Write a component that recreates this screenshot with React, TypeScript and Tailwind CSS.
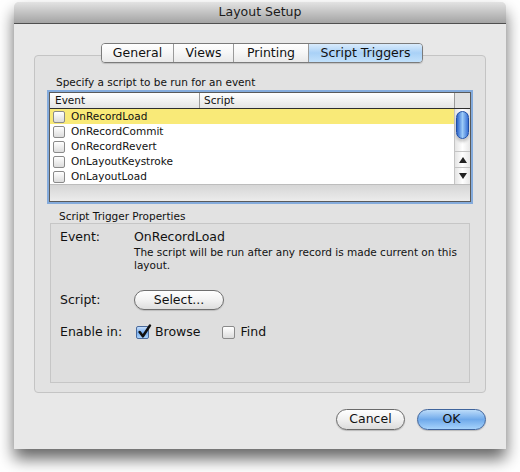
import React from 'react';

const events = ['OnRecordLoad', 'OnRecordCommit', 'OnRecordRevert', 'OnLayoutKeystroke', 'OnLayoutLoad'];
const tabs = [
  { label: 'General', w: 'w-[71px]' },
  { label: 'Views', w: 'w-[60px]' },
  { label: 'Printing', w: 'w-[75px]' },
  { label: 'Script Triggers', w: 'w-[114px]', active: true },
];

const Check: React.FC<{ checked?: boolean; big?: boolean }> = ({ checked, big }) =>
  checked ? (
    <span className="relative block w-[13px] h-[13px] rounded-[2px] border border-[#4a6a9c] bg-gradient-to-b from-[#c6defa] via-[#78aef0] to-[#a9d2fb] shrink-0">
      <svg viewBox="0 0 14 14" className="absolute -top-[3px] left-0 w-[15px] h-[15px]">
        <path d="M2.5 7.5 L5.5 11.5 L12 1.5" fill="none" stroke="#111" strokeWidth="2.4" strokeLinecap="round" strokeLinejoin="round" />
      </svg>
    </span>
  ) : (
    <span className={`block ${big ? 'w-[13px] h-[13px]' : 'w-[12px] h-[12px]'} rounded-[2px] border border-[#8a8a8a] bg-gradient-to-b from-[#ffffff] to-[#dcdcdc] shrink-0`} />
  );

const App: React.FC = () => {
  return (
    <div className="w-[520px] h-[472px] bg-white pt-[2px] pl-[14px] font-['DejaVu_Sans',sans-serif] text-[#111]">
      <div className="w-[492px] h-[447px] flex flex-col rounded-t-[5px] bg-[#e8e8e8] shadow-[0_10px_16px_rgba(0,0,0,0.6)]">
        {/* title bar */}
        <div className="h-[22px] rounded-t-[5px] bg-gradient-to-b from-[#e3e3e3] to-[#a4a4a4] border-b border-[#4f4f4f] flex items-center justify-center text-[12.5px] text-[#1a1a1a]">
          Layout Setup
        </div>

        <div className="flex flex-col px-[20px]">
          {/* tabs */}
          <div className="mt-[19px] ml-[67px] self-start relative z-10 flex h-[20px] rounded-[4px] border border-[#7b7b7b] overflow-hidden shadow-[0_1px_1px_rgba(0,0,0,0.15)]">
            {tabs.map((t, i) => (
              <div
                key={t.label}
                className={`${t.w} h-full flex items-center justify-center text-[12.5px] ${i > 0 ? 'border-l border-[#9a9a9a]' : ''} ${
                  t.active
                    ? 'bg-gradient-to-b from-[#d9ebfc] via-[#a9d1f7] to-[#c2e1fb]'
                    : 'bg-gradient-to-b from-[#ffffff] via-[#f6f6f6] to-[#e9e9e9]'
                }`}
              >
                {t.label}
              </div>
            ))}
          </div>

          {/* tab panel */}
          <div className="-mt-[8px] h-[338px] rounded-[4px] border border-[#c4c4c4] bg-[#e2e2e2] pl-[14px] flex flex-col">
            <div className="mt-[19px] ml-[7px] text-[10.5px] leading-[14px]">Specify a script to be run for an event</div>

            {/* list */}
            <div className="mt-[3px] w-[422px] h-[110px] border border-[#5a5a5a] shadow-[0_0_0_2px_#84abdc] bg-white flex flex-col">
              <div className="h-[16px] flex border-b border-[#2e2e2e] bg-gradient-to-b from-[#ffffff] to-[#e4e4e4] text-[10.5px]">
                <div className="w-[150px] border-r border-[#9a9a9a] pl-[5px] leading-[15px]">Event</div>
                <div className="flex-1 pl-[4px] leading-[15px]">Script</div>
                <div className="w-[16px] border-l border-[#9a9a9a] bg-[#e2e2e2]" />
              </div>
              <div className="flex h-[75px]">
                <div className="flex-1 flex flex-col">
                  {events.map((e, i) => (
                    <div key={e} className={`h-[15px] flex items-center pl-[3px] gap-[6px] text-[10.5px] ${i === 0 ? 'bg-[#f9ea78]' : ''}`}>
                      <Check />
                      <span>{e}</span>
                    </div>
                  ))}
                </div>
                {/* vertical scrollbar */}
                <div className="w-[16px] border-l border-[#c4c4c4] bg-gradient-to-r from-[#e4e4e4] via-[#ffffff] to-[#e8e8e8] flex flex-col">
                  <div className="h-[42px] pt-[2px] px-[1px]">
                    <div className="h-[28px] rounded-full border border-[#1f4fa6] bg-gradient-to-r from-[#2f63c8] via-[#9ccbf8] to-[#3b71d4] shadow-[0_3px_3px_rgba(0,0,0,0.2)]" />
                  </div>
                  <div className="h-[16px] border-t border-[#c4c4c4] flex items-center justify-center">
                    <svg viewBox="0 0 8 6" className="w-[8px] h-[6px]"><path d="M4 0 L8 6 L0 6 Z" fill="#222" /></svg>
                  </div>
                  <div className="h-[16px] border-t border-[#c4c4c4] flex items-center justify-center">
                    <svg viewBox="0 0 8 6" className="w-[8px] h-[6px]"><path d="M0 0 L8 0 L4 6 Z" fill="#222" /></svg>
                  </div>
                </div>
              </div>
              <div className="flex-1 border-t border-[#bdbdbd] bg-gradient-to-b from-[#d6d6d6] to-[#ececec]" />
            </div>

            {/* properties */}
            <div className="mt-[7px] ml-[10px] text-[10.5px] leading-[14px]">Script Trigger Properties</div>
            <div className="w-[420px] h-[160px] ml-[1px] border border-[#c6c6c6] bg-[#dedede] pl-[9px] pt-[5px] flex flex-col">
              <div className="flex">
                <div className="w-[74px] text-[12.5px] leading-[16px]">Event:</div>
                <div className="flex flex-col">
                  <div className="text-[12.5px] leading-[16px]">OnRecordLoad</div>
                  <div className="mt-[1px] text-[10.5px] leading-[13px]">
                    The script will be run after any record is made current on this
                    <br />
                    layout.
                  </div>
                </div>
              </div>
              <div className="flex items-center mt-[18px]">
                <div className="w-[74px] text-[12.5px] leading-[16px]">Script:</div>
                <div className="w-[90px] h-[20px] rounded-full border border-[#6f6f6f] bg-gradient-to-b from-[#ffffff] via-[#f2f2f2] to-[#dedede] flex items-center justify-center text-[12.5px] shadow-[0_1px_1px_rgba(0,0,0,0.15)]">
                  Select...
                </div>
              </div>
              <div className="flex items-center mt-[14px] h-[16px]">
                <div className="w-[76px] text-[12.5px] leading-[16px]">Enable in:</div>
                <Check checked />
                <span className="ml-[6px] text-[12.5px]">Browse</span>
                <span className="ml-[21px]"><Check big /></span>
                <span className="ml-[6px] text-[12.5px]">Find</span>
              </div>
            </div>
          </div>

          {/* buttons */}
          <div className="mt-[16px] flex justify-end gap-[12px]">
            <div className="w-[69px] h-[21px] rounded-full border border-[#6a6a6a] bg-gradient-to-b from-[#ffffff] via-[#f0f0f0] to-[#dcdcdc] flex items-center justify-center text-[12.5px] shadow-[0_1px_1px_rgba(0,0,0,0.2)]">
              Cancel
            </div>
            <div className="w-[69px] h-[21px] rounded-full border border-[#3f649c] bg-gradient-to-b from-[#bcdcf9] via-[#6fa9ea] to-[#a6d3fb] flex items-center justify-center text-[12.5px] shadow-[0_1px_1px_rgba(0,0,0,0.2)]">
              OK
            </div>
          </div>
        </div>
      </div>
    </div>
  );
};

export default App;
